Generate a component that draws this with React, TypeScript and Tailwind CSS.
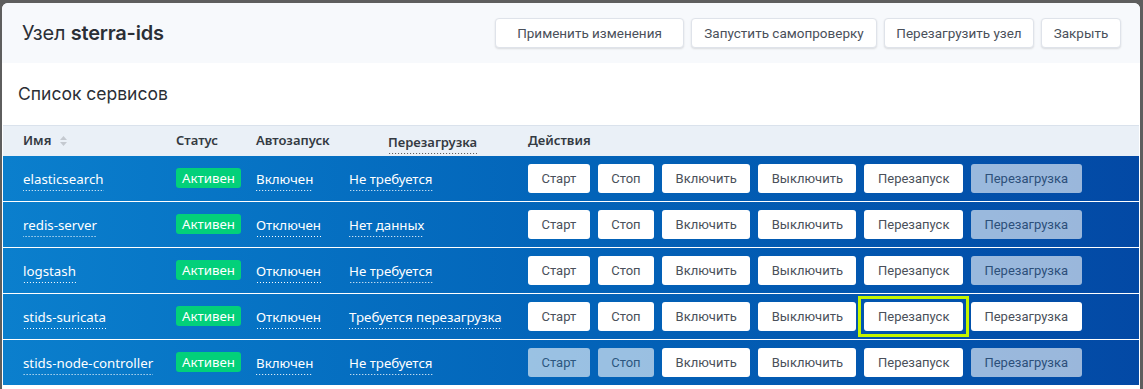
import React from "react";

type Row = {
  name: string;
  autostart: string;
  reboot: string;
  disabled: { start?: boolean; stop?: boolean; reboot?: boolean };
  focus?: boolean;
};

const rows: Row[] = [
  { name: "elasticsearch", autostart: "Включен", reboot: "Не требуется", disabled: { reboot: true } },
  { name: "redis-server", autostart: "Отключен", reboot: "Нет данных", disabled: { reboot: true } },
  { name: "logstash", autostart: "Отключен", reboot: "Не требуется", disabled: { reboot: true } },
  { name: "stids-suricata", autostart: "Отключен", reboot: "Требуется перезагрузка", disabled: {}, focus: true },
  { name: "stids-node-controller", autostart: "Включен", reboot: "Не требуется", disabled: { start: true, stop: true, reboot: true } },
];

const sans = "font-['Noto_Sans',sans-serif]";
const btnFont = "font-['Roboto',sans-serif]";

function TopBtn({ children, w }: { children: React.ReactNode; w: string }) {
  return (
    <button className={`${w} h-[30px] bg-white border border-[#dfe3ea] rounded-[4px] shadow-[0_1px_2px_rgba(0,0,0,0.12)] text-[13.5px] text-[#4a505a] ${btnFont}`}>
      {children}
    </button>
  );
}

function ActBtn({ children, disabled }: { children: React.ReactNode; disabled?: boolean }) {
  return (
    <button
      className={`h-[29px] px-[13.5px] bg-white rounded-[3px] text-[13px] text-[#4a505a] ${btnFont} ${disabled ? "opacity-60" : ""}`}
    >
      {children}
    </button>
  );
}

function Dotted({ children, dark }: { children: React.ReactNode; dark?: boolean }) {
  return (
    <span
      className={`inline-block leading-[17px] pb-[3px] bg-repeat-x bg-bottom bg-[length:3px_1px] ${
        dark
          ? "bg-[linear-gradient(to_right,#555_1px,transparent_1px)]"
          : "bg-[linear-gradient(to_right,#ffffff_1px,transparent_1px)]"
      }`}
    >
      {children}
    </span>
  );
}

export default function App() {
  return (
    <div className="w-[1143px] h-[389px] bg-[#5e5e5e] pt-[3px] pl-[2px] pr-[3px] overflow-hidden">
      <div className="h-[386px] bg-white rounded-t-[6px] overflow-hidden flex flex-col">
        {/* header */}
        <div className="h-[60px] shrink-0 bg-[#f7f9fc] flex items-center justify-between pl-5 pr-[19px]">
          <div className="text-[20px] text-[#2b2f36] font-['Inter',sans-serif] tracking-[-0.2px]">
            Узел <span className="font-semibold">sterra-ids</span>
          </div>
          <div className="flex gap-[7px]">
            <TopBtn w="w-[189px]">Применить изменения</TopBtn>
            <TopBtn w="w-[186px]">Запустить самопроверку</TopBtn>
            <TopBtn w="w-[150px]">Перезагрузить узел</TopBtn>
            <TopBtn w="w-[80px]">Закрыть</TopBtn>
          </div>
        </div>
        {/* section title */}
        <div className="h-[62px] shrink-0 flex items-center pl-4 text-[17.5px] text-[#2b2f36] font-['Inter',sans-serif]">
          Список сервисов
        </div>
        {/* table */}
        <div className="flex flex-col mx-px">
          <div className={`h-[31px] shrink-0 bg-[#eaf0f7] border-t border-[#dae2ec] flex items-center text-[13px] font-semibold text-[#343a42] ${sans}`}>
            <div className="w-[173px] pl-5 flex items-center gap-[9px]">
              Имя
              <svg width="7" height="12" viewBox="0 0 7 12">
                <path d="M3.5 1 L7 5 H0 Z" fill="#c4c9d0" />
                <path d="M3.5 11 L7 7 H0 Z" fill="#c4c9d0" />
              </svg>
            </div>
            <div className="w-[80px]">Статус</div>
            <div className="w-[93px]">Автозапуск</div>
            <div className="w-[179px] pl-[39px] pt-[4px]">
              <Dotted dark>Перезагрузка</Dotted>
            </div>
            <div>Действия</div>
          </div>
          {rows.map((r) => (
            <div
              key={r.name}
              className={`h-[46px] shrink-0 bg-gradient-to-r from-[#0b7fcd] to-[#0349a5] border-b border-white flex items-center text-[13.3px] text-white ${sans}`}
            >
              <div className="w-[173px] pl-5 pt-[3px]">
                <Dotted>{r.name}</Dotted>
              </div>
              <div className="w-[80px]">
                <span className="inline-block bg-[#03d07a] rounded-[3px] px-[6px] leading-[20px]">Активен</span>
              </div>
              <div className="w-[93px] pt-[3px]">
                <Dotted>{r.autostart}</Dotted>
              </div>
              <div className="w-[179px] pt-[3px]">
                <Dotted>{r.reboot}</Dotted>
              </div>
              <div className="flex gap-[8px]">
                <ActBtn disabled={r.disabled.start}>Старт</ActBtn>
                <ActBtn disabled={r.disabled.stop}>Стоп</ActBtn>
                <ActBtn>Включить</ActBtn>
                <ActBtn>Выключить</ActBtn>
                {r.focus ? (
                  <span className="-m-[6px] p-[3px] border-[3px] border-[#c4f500] flex">
                    <ActBtn>Перезапуск</ActBtn>
                  </span>
                ) : (
                  <ActBtn>Перезапуск</ActBtn>
                )}
                <ActBtn disabled={r.disabled.reboot}>Перезагрузка</ActBtn>
              </div>
            </div>
          ))}
        </div>
      </div>
    </div>
  );
}
